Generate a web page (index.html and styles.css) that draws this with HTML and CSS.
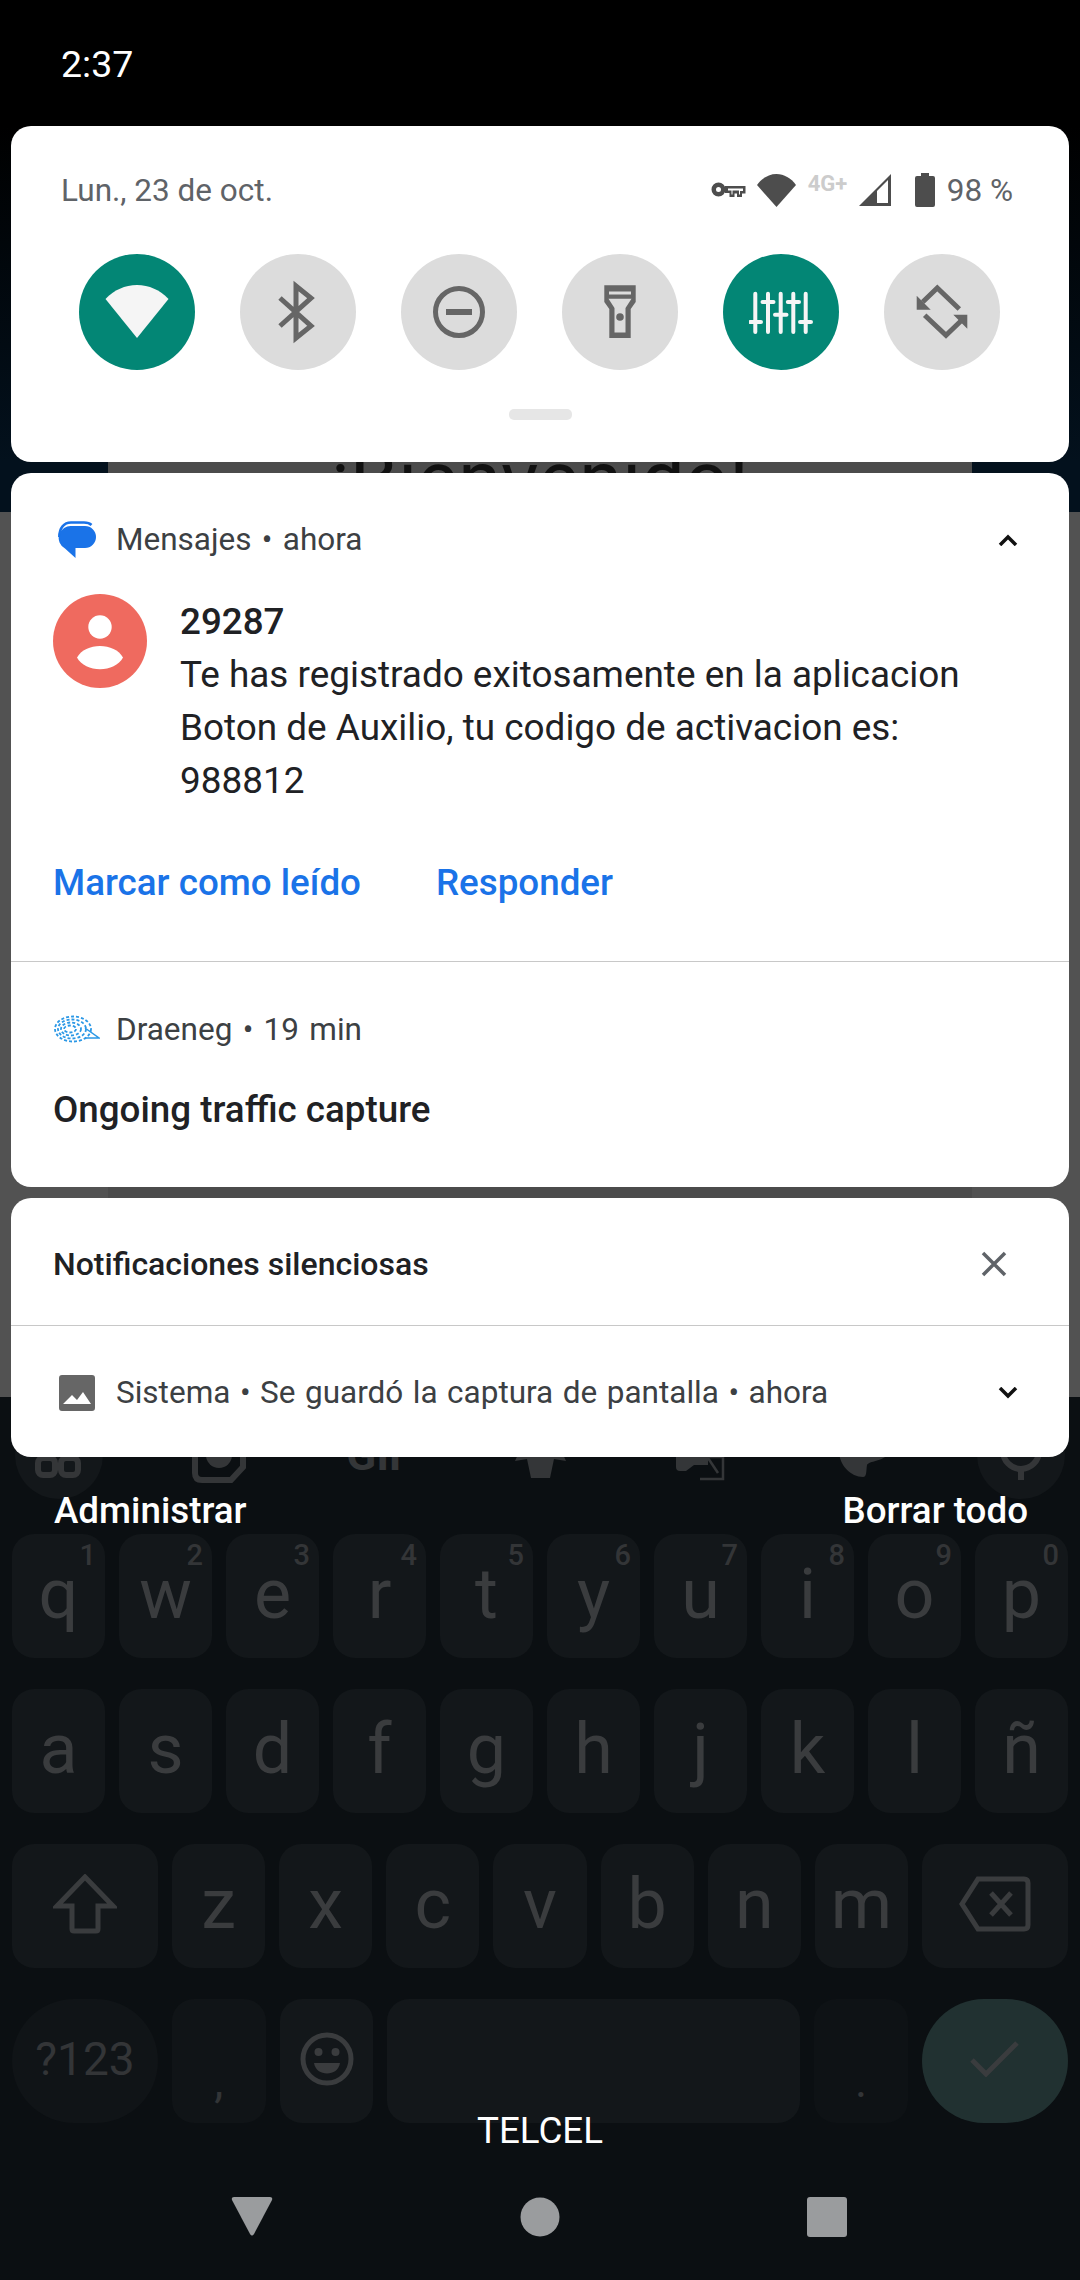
FILE: index.html
```html
<!DOCTYPE html>
<html lang="es">
<head>
    <meta charset="UTF-8">
    <meta name="viewport" content="width=device-width, initial-scale=1.0">
    <title>Notificaciones</title>
    <link rel="stylesheet" href="styles.css">
</head>
<body>
    <div class="screen">
        <!-- the app and keyboard underneath the shade -->
        <div class="app">
            <div class="app-card"><div class="welcome">¡Bienvenido!</div></div>
        </div>
        <div class="keyboard">
            <div class="strip">
                <div class="strip-item round">
                    <svg viewBox="0 0 88 88"><rect x="23" y="47" width="17" height="17" rx="5" class="ghost-line"/><rect x="46" y="47" width="17" height="17" rx="5" class="ghost-line"/></svg>
                </div>
                <div class="strip-item">
                    <svg viewBox="0 0 88 88"><path d="M20 30H68V56L56 69H27Q20 69 20 62Z" class="ghost-line"/><circle cx="44" cy="44" r="13" class="ghost-fill"/></svg>
                </div>
                <div class="strip-item"><span class="gif">GIF</span></div>
                <div class="strip-item">
                    <svg viewBox="0 0 88 88"><path d="M44 20L60 28L70 50L58 48L54 67H35L31 48L19 50L29 28Z" class="ghost-fill"/></svg>
                </div>
                <div class="strip-item">
                    <svg viewBox="0 0 88 88"><path d="M20 30H52V54H38L30 60H24Q20 60 20 56Z" class="ghost-fill"/><path d="M44 46H67V68H44" class="ghost-thin"/><path d="M50 44L62 62" class="ghost-thin"/></svg>
                </div>
                <div class="strip-item">
                    <svg viewBox="0 0 88 88"><path d="M22 30H70V44C66 50 52 50 50 54C49 60 50 66 46 66C34 66 22 54 22 40Z" class="ghost-fill"/></svg>
                </div>
                <div class="strip-item round">
                    <svg viewBox="0 0 88 88"><path d="M26 40A18 18 0 0 0 62 40" class="ghost-line"/><path d="M44 58V69" class="ghost-line"/></svg>
                </div>
            </div>

            <div class="key-row">
                <div class="key"><sup class="hint">1</sup>q</div>
                <div class="key"><sup class="hint">2</sup>w</div>
                <div class="key"><sup class="hint">3</sup>e</div>
                <div class="key"><sup class="hint">4</sup>r</div>
                <div class="key"><sup class="hint">5</sup>t</div>
                <div class="key"><sup class="hint">6</sup>y</div>
                <div class="key"><sup class="hint">7</sup>u</div>
                <div class="key"><sup class="hint">8</sup>i</div>
                <div class="key"><sup class="hint">9</sup>o</div>
                <div class="key"><sup class="hint">0</sup>p</div>
            </div>
            <div class="key-row">
                <div class="key">a</div>
                <div class="key">s</div>
                <div class="key">d</div>
                <div class="key">f</div>
                <div class="key">g</div>
                <div class="key">h</div>
                <div class="key">j</div>
                <div class="key">k</div>
                <div class="key">l</div>
                <div class="key">ñ</div>
            </div>
            <div class="key-row">
                <div class="key wide">
                    <svg class="key-icon" width="64" height="60" viewBox="0 0 64 60"><path d="M32 3L60 32H45V55Q45 57 43 57H21Q19 57 19 55V32H4Z"/></svg>
                </div>
                <div class="key">z</div>
                <div class="key">x</div>
                <div class="key">c</div>
                <div class="key">v</div>
                <div class="key">b</div>
                <div class="key">n</div>
                <div class="key">m</div>
                <div class="key wide">
                    <svg class="key-icon" width="72" height="56" viewBox="0 0 72 56"><path d="M3 28L19 3H65Q69 3 69 7V49Q69 53 65 53H19Z"/><path d="M32 17L52 39M52 17L32 39"/></svg>
                </div>
            </div>
            <div class="key-row">
                <div class="key wide pill num-key">?123</div>
                <div class="key small-key">,</div>
                <div class="key">
                    <svg class="key-icon" width="56" height="56" viewBox="0 0 56 56"><circle cx="28" cy="28" r="24"/><circle cx="19.5" cy="21" r="4" class="smile-eye"/><circle cx="36.5" cy="21" r="4" class="smile-eye"/><path d="M15 32H41C39 46 17 46 15 32Z" class="smile-eye"/></svg>
                </div>
                <div class="key space"></div>
                <div class="key small-key dim">.</div>
                <div class="key wide pill enter">
                    <svg class="key-icon" width="50" height="36" viewBox="0 0 50 36"><path d="M2 19L16 33L47 2"/></svg>
                </div>
            </div>

            <div class="carrier">TELCEL</div>
            <div class="nav">
                <svg width="42" height="39" viewBox="0 0 42 39"><path d="M3 0H39Q42 0 41 3L23 37Q21 40 19 37L1 3Q0 0 3 0Z"/></svg>
                <svg width="40" height="40" viewBox="0 0 40 40"><circle cx="20" cy="20" r="19.5"/></svg>
                <svg width="40" height="40" viewBox="0 0 40 40"><rect width="40" height="40" rx="3"/></svg>
            </div>
        </div>

        <!-- notification shade, lies over the app -->
        <div class="shade">
            <div class="status-bar">2:37</div>

            <div class="card quick">
                <div class="quick-head">
                    <span class="date">Lun., 23 de oct.</span>
                    <div class="status-icons">
                        <svg class="ic-key" width="36" height="18" viewBox="0 0 36 18"><path d="M7.5 1.5A7 7 0 1 1 7.5 15.5A7 7 0 0 1 7.5 1.5ZM7.5 6A2.5 2.5 0 1 0 7.5 11A2.5 2.5 0 0 0 7.5 6Z" fill-rule="evenodd"/><path d="M14 5H34.5V12.5H31V16H26V12.5H23.5V16H18.5V12H14ZM17 7.5V9.5H20.5V13.5H21.5V9.5H28V13.5H29V10H32V7.5Z" fill-rule="evenodd"/></svg>
                        <svg class="ic-wifi" width="39" height="33" viewBox="0 0 39 33"><path d="M19.5 33L0 11C5 4 12 0 19.5 0S34 4 39 11Z"/></svg>
                        <span class="net">4G+</span>
                        <svg class="ic-signal" width="32" height="32" viewBox="0 0 32 32"><path d="M0 32L32 0V32Z"/><path d="M18 17L29 6V29H18Z" class="signal-empty"/></svg>
                        <svg class="ic-batt" width="20" height="34" viewBox="0 0 20 34"><path d="M6 0H14V3H18Q20 3 20 5V32Q20 34 18 34H2Q0 34 0 32V5Q0 3 2 3H6Z"/></svg>
                        <span class="percent">98 %</span>
                    </div>
                </div>
                <div class="tiles">
                    <div class="tile on">
                        <svg width="64" height="64" viewBox="0 0 64 64"><path d="M32 58L.5 19C9 10 20 5 32 5S55 10 63.5 19Z"/></svg>
                    </div>
                    <div class="tile">
                        <svg width="64" height="64" viewBox="0 0 64 64"><path d="M14 18L45 46L30 58V6L45 18L14 46" class="stroke"/></svg>
                    </div>
                    <div class="tile">
                        <svg width="64" height="64" viewBox="0 0 64 64"><circle cx="32" cy="32" r="23.5" class="stroke"/><rect x="19" y="29" width="26" height="6"/></svg>
                    </div>
                    <div class="tile">
                        <svg width="64" height="64" viewBox="0 0 64 64"><path d="M16.3 5.3H47.7V22L42.7 29V58H21.3V29L16.3 22Z"/><path d="M21 11.5H43V14.5H21ZM20.5 18.7H43.5L37.5 28V52.5H26.5V28Z" class="cut"/><circle cx="32" cy="37" r="3.8"/></svg>
                    </div>
                    <div class="tile on">
                        <svg width="64" height="64" viewBox="0 0 64 64"><path d="M6.3 13.7V52M19 13.7V52M31.7 13.7V52M44.3 13.7V52M56.7 13.7V52" class="stroke"/><path d="M1 42H12M13.5 22H24.5M26 34.7H37.5M38.8 22H50M51 42H62" class="stroke"/></svg>
                    </div>
                    <div class="tile">
                        <svg width="64" height="64" viewBox="0 0 64 64"><path d="M12.7 22L27.3 8L49.3 29M14.7 35.3L36 55.3L52.7 39.3" class="stroke"/><path d="M6.7 29.7V15.7L20.7 29.7ZM57.3 34.7V48.7L43.3 34.7Z"/></svg>
                    </div>
                </div>
                <div class="handle"></div>
            </div>

            <div class="card">
                <div class="notif-head first">
                    <svg class="app-icon" width="40" height="40" viewBox="0 0 40 40"><path d="M14 6H27A11 11 0 0 1 27 28H17.5V38L7 28.5A12 12 0 0 1 14 6Z" fill="#1a73e8"/><path d="M1.3 17C1.3 8 6 2.5 13 2.5H26C29 2.5 31.5 3 33.5 5" fill="none" stroke="#1a73e8" stroke-width="2.5"/></svg>
                    <span class="app-line">Mensajes • ahora</span>
                    <svg class="chevron" width="20" height="12" viewBox="0 0 20 12"><path d="M2 11L10 3L18 11"/></svg>
                </div>
                <div class="message">
                    <svg class="avatar" width="94" height="94" viewBox="0 0 94 94"><circle cx="47" cy="47" r="47" fill="#ef6a5f"/><circle cx="47" cy="33" r="11.7" fill="#fff"/><path d="M24 63.5C32 48 62 48 70 63.5C62 79 32 79 24 63.5Z" fill="#fff"/></svg>
                    <div class="message-text">
                        <div class="sender">29287</div>
                        <div class="body">Te has registrado exitosamente en la aplicacion</div>
                        <div class="body">Boton de Auxilio, tu codigo de activacion es:</div>
                        <div class="body">988812</div>
                    </div>
                </div>
                <div class="actions">
                    <span class="action">Marcar como leído</span>
                    <span class="action">Responder</span>
                </div>
                <div class="divider"></div>
                <div class="notif-head second">
                    <svg class="app-icon hedgehog" width="46" height="30" viewBox="0 0 46 30"><ellipse cx="19" cy="14" rx="18" ry="12.5"/><ellipse cx="18" cy="14" rx="14" ry="9.5"/><ellipse cx="17" cy="14" rx="10" ry="6.5"/><ellipse cx="16" cy="14" rx="6" ry="3.5"/><path class="solid" d="M31 13L45 23H31"/></svg>
                    <span class="app-line">Draeneg • 19 min</span>
                </div>
                <div class="ongoing">Ongoing traffic capture</div>
            </div>

            <div class="card">
                <div class="silent-head">
                    <span class="silent-title">Notificaciones silenciosas</span>
                    <svg class="close" width="26" height="26" viewBox="0 0 26 26"><path d="M2 2L24 24M24 2L2 24"/></svg>
                </div>
                <div class="divider"></div>
                <div class="silent-row">
                    <svg class="app-icon" width="36" height="36" viewBox="0 0 36 36"><path d="M3 0H33Q36 0 36 3V33Q36 36 33 36H3Q0 36 0 33V3Q0 0 3 0ZM4 29H32L24 17L18 25L13 20Z" fill="#666" fill-rule="evenodd"/></svg>
                    <span class="app-line">Sistema • Se guardó la captura de pantalla • ahora</span>
                    <svg class="chevron" width="20" height="12" viewBox="0 0 20 12"><path d="M2 1L10 9L18 1"/></svg>
                </div>
            </div>

            <div class="shade-foot">
                <span class="foot-btn">Administrar</span>
                <span class="foot-btn">Borrar todo</span>
            </div>
        </div>
    </div>
</body>
</html>
```

FILE: styles.css
```css
* {
    box-sizing: border-box;
}
html, body {
    margin: 0;
    padding: 0;
    background-color: #0b0f12;
}
body {
    font-family: Roboto, "Noto Sans", sans-serif;
    color: #202124;
}
svg {
    display: block;
    flex: none;
}
.screen {
    position: relative;
    width: 1080px;
    height: 2280px;
    overflow: hidden;
}

/* underneath */
.app {
    height: 1397px;
    padding-top: 440px;
    background: linear-gradient(#000 126px, #03111d 462px, #03111d 512px, #525252 512px);
}
.app-card {
    height: 957px;
    margin: 0 108px;
    background-color: #4b4b4b;
    text-align: center;
}
.welcome {
    font-size: 77.6px;
    line-height: 80px;
    color: #111;
}
.keyboard {
    height: 883px;
    background-color: #0b0f12;
}
.strip {
    height: 137px;
    padding: 14px 15px 0;
    display: flex;
    justify-content: space-between;
    align-items: flex-start;
}
.strip-item {
    width: 88px;
    height: 88px;
    display: flex;
    align-items: center;
    justify-content: center;
    border-radius: 50%;
}
.strip-item.round {
    background-color: #13171a;
}
.ghost-fill {
    fill: #343638;
}
.ghost-line {
    fill: none;
    stroke: #343638;
    stroke-width: 6;
}
.ghost-thin {
    fill: none;
    stroke: #343638;
    stroke-width: 2.5;
}
.gif {
    font-size: 44px;
    font-weight: 700;
    color: #343638;
}
.key-row {
    display: flex;
    gap: 14px;
    padding: 0 12px;
    margin-bottom: 31px;
}
.key {
    position: relative;
    flex: 1 1 0;
    height: 124px;
    display: flex;
    align-items: center;
    justify-content: center;
    padding-bottom: 4px;
    background-color: #13171a;
    border-radius: 22px;
    font-size: 70px;
    color: #3a3c3e;
}
.key.wide {
    flex: 0 0 146px;
}
.key.space {
    flex: 0 0 413px;
}
.key.pill {
    border-radius: 62px;
}
.hint {
    position: absolute;
    top: 4px;
    right: 9px;
    font-size: 29px;
    line-height: 34px;
    font-weight: 500;
    color: #333537;
    vertical-align: baseline;
}
.key-icon {
    fill: none;
    stroke: #3a3c3e;
    stroke-width: 5;
}
.smile-eye {
    fill: #3a3c3e;
    stroke: none;
}
.num-key {
    font-size: 46px;
    background-color: #101417;
    color: #333537;
}
.small-key {
    font-size: 46px;
    padding-top: 44px;
    color: #333537;
    background-color: #101417;
}
.small-key.dim {
    background-color: #0e1215;
}
.enter {
    background-color: #213131;
}
.carrier {
    position: relative;
    margin-top: -43px;
    font-size: 36.75px;
    line-height: 40px;
    text-align: center;
    color: #fff;
}
.nav {
    margin-top: 46px;
    padding: 0 233px 0 231px;
    display: flex;
    justify-content: space-between;
    fill: #9a9c9e;
}

/* shade */
.shade {
    position: absolute;
    top: 0;
    left: 0;
    width: 1080px;
    display: flex;
    flex-direction: column;
    gap: 11px;
}
.status-bar {
    height: 115px;
    padding: 43px 0 0 61px;
    font-size: 37.5px;
    line-height: 42px;
    color: #fff;
}
.card {
    margin: 0 11px;
    background-color: #fff;
    border-radius: 20px;
    overflow: hidden;
}
.quick {
    height: 336px;
}
.quick-head {
    height: 128px;
    padding: 0 56px 0 50px;
    display: flex;
    align-items: center;
    justify-content: space-between;
}
.date {
    font-size: 31.5px;
    color: #5f6368;
}
.status-icons {
    display: flex;
    align-items: center;
    fill: #4d4d4d;
}
.ic-wifi {
    margin-left: 10px;
}
.net {
    margin: -14px 0 0 12px;
    width: 44px;
    font-size: 22px;
    font-weight: 700;
    color: #cccccc;
}
.ic-signal {
    margin-left: 7px;
}
.signal-empty {
    fill: #fff;
}
.ic-batt {
    margin-left: 24px;
}
.percent {
    margin-left: 12px;
    font-size: 31.5px;
    color: #5f6368;
}
.tiles {
    padding: 0 69px 0 68px;
    display: flex;
    justify-content: space-between;
}
.tile {
    width: 116px;
    height: 116px;
    border-radius: 50%;
    display: flex;
    align-items: center;
    justify-content: center;
    background-color: #dcdcdc;
    fill: #666;
}
.tile .stroke {
    fill: none;
    stroke: #666;
    stroke-width: 5;
}
.tile .cut {
    fill: #dcdcdc;
}
.tile.on {
    background-color: #038675;
    fill: #f5f5f5;
}
.tile.on .stroke {
    stroke: #f5f5f5;
    stroke-width: 4;
    stroke-linecap: round;
}
.handle {
    width: 63px;
    height: 11px;
    margin: 39px auto 0;
    background-color: #e6e6e6;
    border-radius: 5px;
}
.notif-head,
.silent-row {
    display: flex;
    align-items: center;
    padding: 0 51px 0 47px;
}
.notif-head.first {
    height: 91px;
    padding-top: 43px;
}
.notif-head.first + .message {
    margin-top: 30px;
}
.app-line {
    font-size: 31.5px;
    line-height: 36px;
    word-spacing: 2.5px;
    color: #3c4043;
    flex: 1;
    margin-left: 18px;
}
.chevron {
    fill: none;
    stroke: #111;
    stroke-width: 3.5;
}
.message {
    display: flex;
    padding-left: 42px;
}
.message-text {
    margin-left: 33px;
    padding-top: 9px;
}
.sender {
    font-size: 36.75px;
    line-height: 38px;
    font-weight: 500;
    margin-bottom: 7px;
}
.body {
    font-size: 36.9px;
    line-height: 53px;
}
.actions {
    display: flex;
    gap: 75px;
    padding: 56px 0 0 42px;
    height: 154px;
}
.action {
    font-size: 36.75px;
    line-height: 40px;
    font-weight: 500;
    color: #1a73e8;
}
.divider {
    height: 1px;
    background-color: #c8c8c8;
}
.notif-head.second {
    padding: 0 51px 0 43px;
    margin-top: 53px;
    height: 30px;
}
.notif-head.second .app-line {
    margin-left: 16px;
}
.hedgehog {
    fill: none;
    stroke: #2b98e6;
    stroke-width: 1.8;
    stroke-dasharray: 3 2;
}
.hedgehog .solid {
    stroke-dasharray: none;
    stroke-width: 1.5;
}
.ongoing {
    margin: 45px 0 57px 42px;
    font-size: 36.75px;
    line-height: 40px;
    font-weight: 500;
}
.silent-head {
    height: 127px;
    padding: 4px 62px 0 42px;
    display: flex;
    align-items: center;
    justify-content: space-between;
}
.silent-title {
    font-size: 32px;
    font-weight: 500;
}
.close {
    fill: none;
    stroke: #5f6368;
    stroke-width: 3.5;
}
.silent-row {
    height: 131px;
    padding-top: 3px;
    padding-left: 48px;
}
.silent-row .app-line {
    margin-left: 21px;
    word-spacing: 1.7px;
}
.shade-foot {
    padding: 23px 52px 0 54px;
    display: flex;
    justify-content: space-between;
}
.foot-btn {
    font-size: 36.75px;
    line-height: 40px;
    font-weight: 500;
    color: #fff;
}
```
